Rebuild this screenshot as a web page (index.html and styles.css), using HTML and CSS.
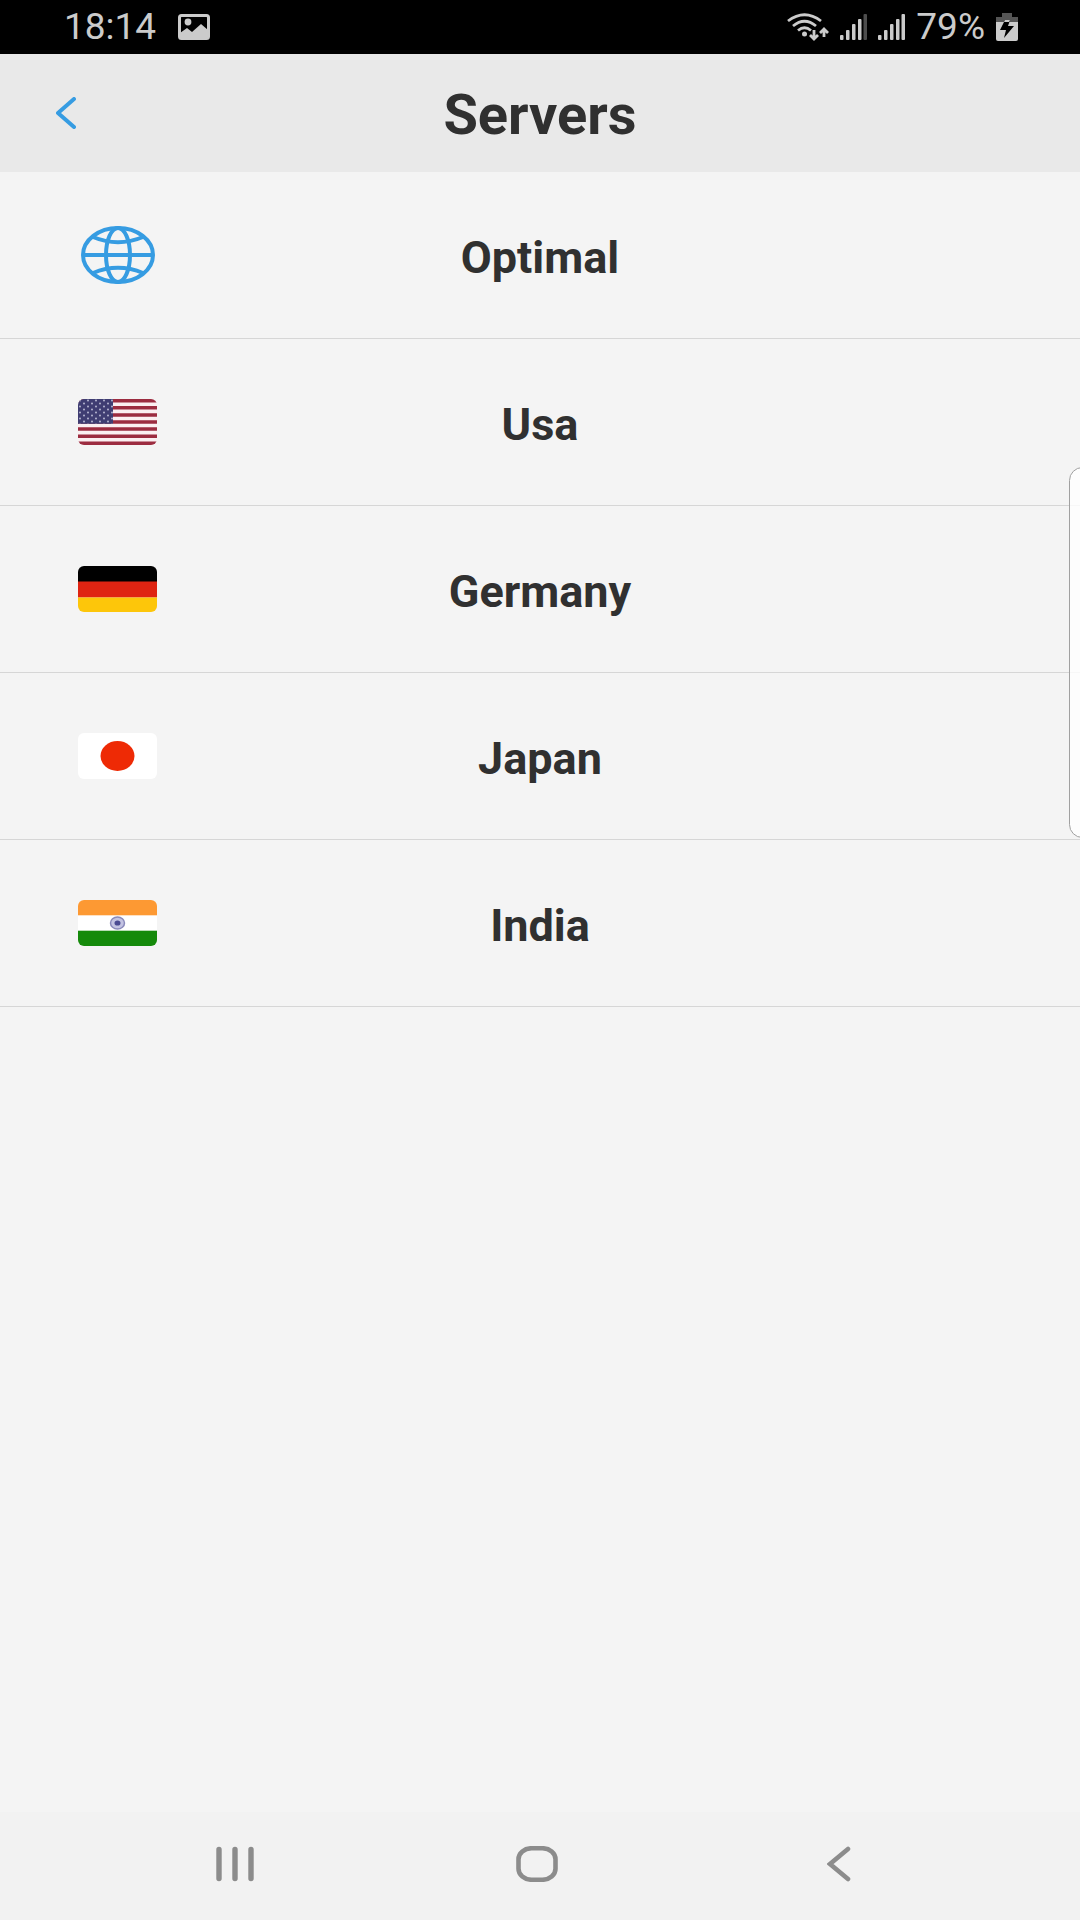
FILE: index.html
```html
<!DOCTYPE html>
<html lang="en">

<head>
    <meta charset="UTF-8">
    <meta name="viewport" content="width=device-width, initial-scale=1.0">
    <title>Servers</title>
    <link rel="stylesheet" href="styles.css">
</head>

<body>
    <div class="status-bar">
        <div class="status-left">
            <span>18:14</span>
            <svg width="32" height="26" viewBox="0 0 32 26">
                <rect x="1.5" y="1.5" width="29" height="23" rx="2" fill="none" stroke="#cbcbcb" stroke-width="3" />
                <circle cx="10" cy="8" r="3.4" fill="#cbcbcb" />
                <path d="M2 19 L9 14 L14 18 L23 10 L30 16 V24 H2 Z" fill="#cbcbcb" />
            </svg>
        </div>
        <div class="status-right">
            <svg width="42" height="28" viewBox="0 0 42 28">
                <g fill="none" stroke="#cbcbcb" stroke-width="2.8">
                    <path d="M1 8 Q17.5 -4.5 34 8" />
                    <path d="M6 13 Q17.5 3.5 29 13" />
                    <path d="M11 17.5 Q17.5 12 24 17.5" />
                    <path d="M27 17 V26 M23 22 L27 26 L31 22" />
                    <path d="M37 24 V16 M33 20 L37 16 L41 20" />
                </g>
                <circle cx="17.5" cy="21" r="2.5" fill="#cbcbcb" />
            </svg>
            <svg width="27" height="26" viewBox="0 0 27 26" fill="#cbcbcb">
                <rect x="0" y="21" width="3.5" height="5" rx="1" />
                <rect x="6" y="16" width="3.5" height="10" rx="1" />
                <rect x="12" y="10" width="3.5" height="16" rx="1" />
                <rect x="18" y="5" width="3.5" height="21" rx="1" />
                <rect x="23.5" y="0" width="3.5" height="26" rx="1" fill="#4d4d4d" />
            </svg>
            <svg width="27" height="26" viewBox="0 0 27 26" fill="#cbcbcb">
                <rect x="0" y="21" width="3.5" height="5" rx="1" />
                <rect x="6" y="16" width="3.5" height="10" rx="1" />
                <rect x="12" y="10" width="3.5" height="16" rx="1" />
                <rect x="18" y="5" width="3.5" height="21" rx="1" />
                <rect x="23.5" y="0" width="3.5" height="26" rx="1" />
            </svg>
            <span>79%</span>
            <svg width="22" height="28" viewBox="0 0 22 28">
                <path d="M6 0 H16 V4 H22 V9 H0 V4 H6 Z" fill="#555" />
                <path d="M0 9 H22 V26 Q22 28 20 28 H2 Q0 28 0 26 Z" fill="#cbcbcb" />
                <path d="M9 7 H14 L12 13 H18 L8 25 L10 17 H4 Z" fill="#000" />
                <path d="M9 7 H14 L13 9 H8 Z" fill="#cbcbcb" />
            </svg>
        </div>
    </div>

    <header class="header">
        <button class="back" aria-label="Back">
            <svg width="20" height="32" viewBox="0 0 20 32">
                <path d="M18 2 L2 16 L18 30" fill="none" stroke="#369ce2" stroke-width="4" stroke-linecap="round" stroke-linejoin="round" />
            </svg>
        </button>
        <h1 class="title">Servers</h1>
    </header>

    <main class="content">
        <button class="server">
            <span class="flag">
                <svg width="74" height="58" viewBox="0 0 74 58" fill="none" stroke="#369ce2" stroke-width="4">
                    <ellipse cx="37" cy="29" rx="35" ry="27" />
                    <ellipse cx="37" cy="29" rx="12" ry="27" />
                    <path d="M2 29 H72" />
                    <path d="M12 11 Q37 21.5 62 11" />
                    <path d="M12 47 Q37 36.5 62 47" />
                </svg>
            </span>
            <span class="name">Optimal</span>
        </button>

        <button class="server">
            <span class="flag">
                <svg class="rounded" width="79" height="46" viewBox="0 0 79 46">
                    <defs>
                        <pattern id="stars" width="8" height="6" patternUnits="userSpaceOnUse">
                            <circle cx="2" cy="1.5" r="1" fill="#b4b4d0" />
                            <circle cx="6" cy="4.5" r="1" fill="#b4b4d0" />
                        </pattern>
                    </defs>
                    <rect width="79" height="46" fill="#fbeff1" />
                    <path d="M0 1.77 H79 M0 8.85 H79 M0 15.92 H79 M0 23 H79 M0 30.08 H79 M0 37.15 H79 M0 44.23 H79" stroke="#9c2c40" stroke-width="3.54" />
                    <rect width="35" height="24.8" fill="#3f3d72" />
                    <rect width="35" height="24.8" fill="url(#stars)" />
                </svg>
            </span>
            <span class="name">Usa</span>
        </button>

        <button class="server">
            <span class="flag">
                <svg class="rounded" width="79" height="46" viewBox="0 0 79 46">
                    <rect width="79" height="16" fill="#000" />
                    <rect y="15.5" width="79" height="16" fill="#df2412" />
                    <rect y="31.5" width="79" height="15" fill="#fdc60a" />
                </svg>
            </span>
            <span class="name">Germany</span>
        </button>

        <button class="server">
            <span class="flag">
                <svg class="rounded" width="79" height="46" viewBox="0 0 79 46">
                    <rect width="79" height="46" fill="#fff" />
                    <ellipse cx="39.5" cy="23" rx="17" ry="15" fill="#ee2a05" />
                </svg>
            </span>
            <span class="name">Japan</span>
        </button>

        <button class="server">
            <span class="flag">
                <svg class="rounded" width="79" height="46" viewBox="0 0 79 46">
                    <rect width="79" height="46" fill="#fff" />
                    <rect width="79" height="15.3" fill="#fd9933" />
                    <rect y="30.7" width="79" height="15.3" fill="#158a0b" />
                    <ellipse cx="39.5" cy="23" rx="7" ry="6" fill="#c3c3e2" stroke="#8a8abb" stroke-width="1.5" />
                    <ellipse cx="39.5" cy="23" rx="3" ry="2.6" fill="#4b4b92" />
                </svg>
            </span>
            <span class="name">India</span>
        </button>

        <div class="edge-panel"></div>
    </main>

    <nav class="nav-bar">
        <button aria-label="Recent apps">
            <svg width="38" height="36" viewBox="0 0 38 36">
                <path d="M3 3.5 V32.5 M19 3.5 V32.5 M35 3.5 V32.5" stroke="#8c8c8c" stroke-width="5.4" stroke-linecap="round" />
            </svg>
        </button>
        <button aria-label="Home">
            <svg width="42" height="36" viewBox="0 0 42 36">
                <rect x="2.5" y="2.25" width="37" height="31.5" rx="13" ry="11" fill="none" stroke="#8c8c8c" stroke-width="4.6" />
            </svg>
        </button>
        <button aria-label="Back">
            <svg width="24" height="36" viewBox="0 0 24 36">
                <path d="M21 3 L3 18 L21 33" fill="none" stroke="#8c8c8c" stroke-width="4.6" stroke-linecap="round" />
            </svg>
        </button>
    </nav>
</body>

</html>
```
FILE: styles.css
```css
* {
    box-sizing: border-box;
    font-family: Roboto, sans-serif;
}

body {
    margin: 0;
    min-height: 100vh;
    display: flex;
    flex-direction: column;
    background-color: #f4f4f4;
    color: #303030;
}

svg {
    display: block;
}

button {
    padding: 0;
    border: none;
    background: none;
    color: inherit;
}

/* status bar */
.status-bar {
    display: flex;
    justify-content: space-between;
    align-items: center;
    height: 54px;
    padding: 0 62px 0 64px;
    background-color: #000;
    color: #cbcbcb;
    font-size: 37px;
    line-height: 54px;
}

.status-left {
    display: flex;
    align-items: center;
    gap: 22px;
}

.status-right {
    display: flex;
    align-items: center;
    gap: 11px;
}

/* header */
.header {
    display: grid;
    grid-template-columns: 1fr auto 1fr;
    align-items: center;
    height: 118px;
    background-color: #e9e9e9;
}

.back {
    justify-self: start;
    padding-left: 56px;
}

.title {
    margin: 0;
    padding-top: 4px;
    font-size: 56px;
    font-weight: 700;
}

/* server list */
.content {
    position: relative;
    flex: 1;
    overflow: hidden;
}

.server {
    display: grid;
    grid-template-columns: 1fr auto 1fr;
    align-items: center;
    width: 100%;
    height: 167px;
    border-bottom: 1px solid #d6d6d6;
}

.flag {
    display: flex;
    justify-content: center;
    width: 235px;
}

.rounded {
    border-radius: 6px;
}

.name {
    padding-top: 4px;
    font-size: 45px;
    font-weight: 700;
}

/* handle of the side panel, cut off by the screen edge */
.edge-panel {
    position: absolute;
    top: 295px;
    right: -16px;
    width: 27px;
    height: 371px;
    border: 1px solid #a0a0a0;
    border-radius: 14px;
    background-color: rgba(255, 255, 255, 0.8);
}

/* navigation bar */
.nav-bar {
    display: grid;
    grid-template-columns: repeat(3, 1fr);
    height: 108px;
    padding: 0 90px 4px 84px;
    background-color: #f2f2f2;
}

.nav-bar button {
    display: flex;
    justify-content: center;
    align-items: center;
}
```
